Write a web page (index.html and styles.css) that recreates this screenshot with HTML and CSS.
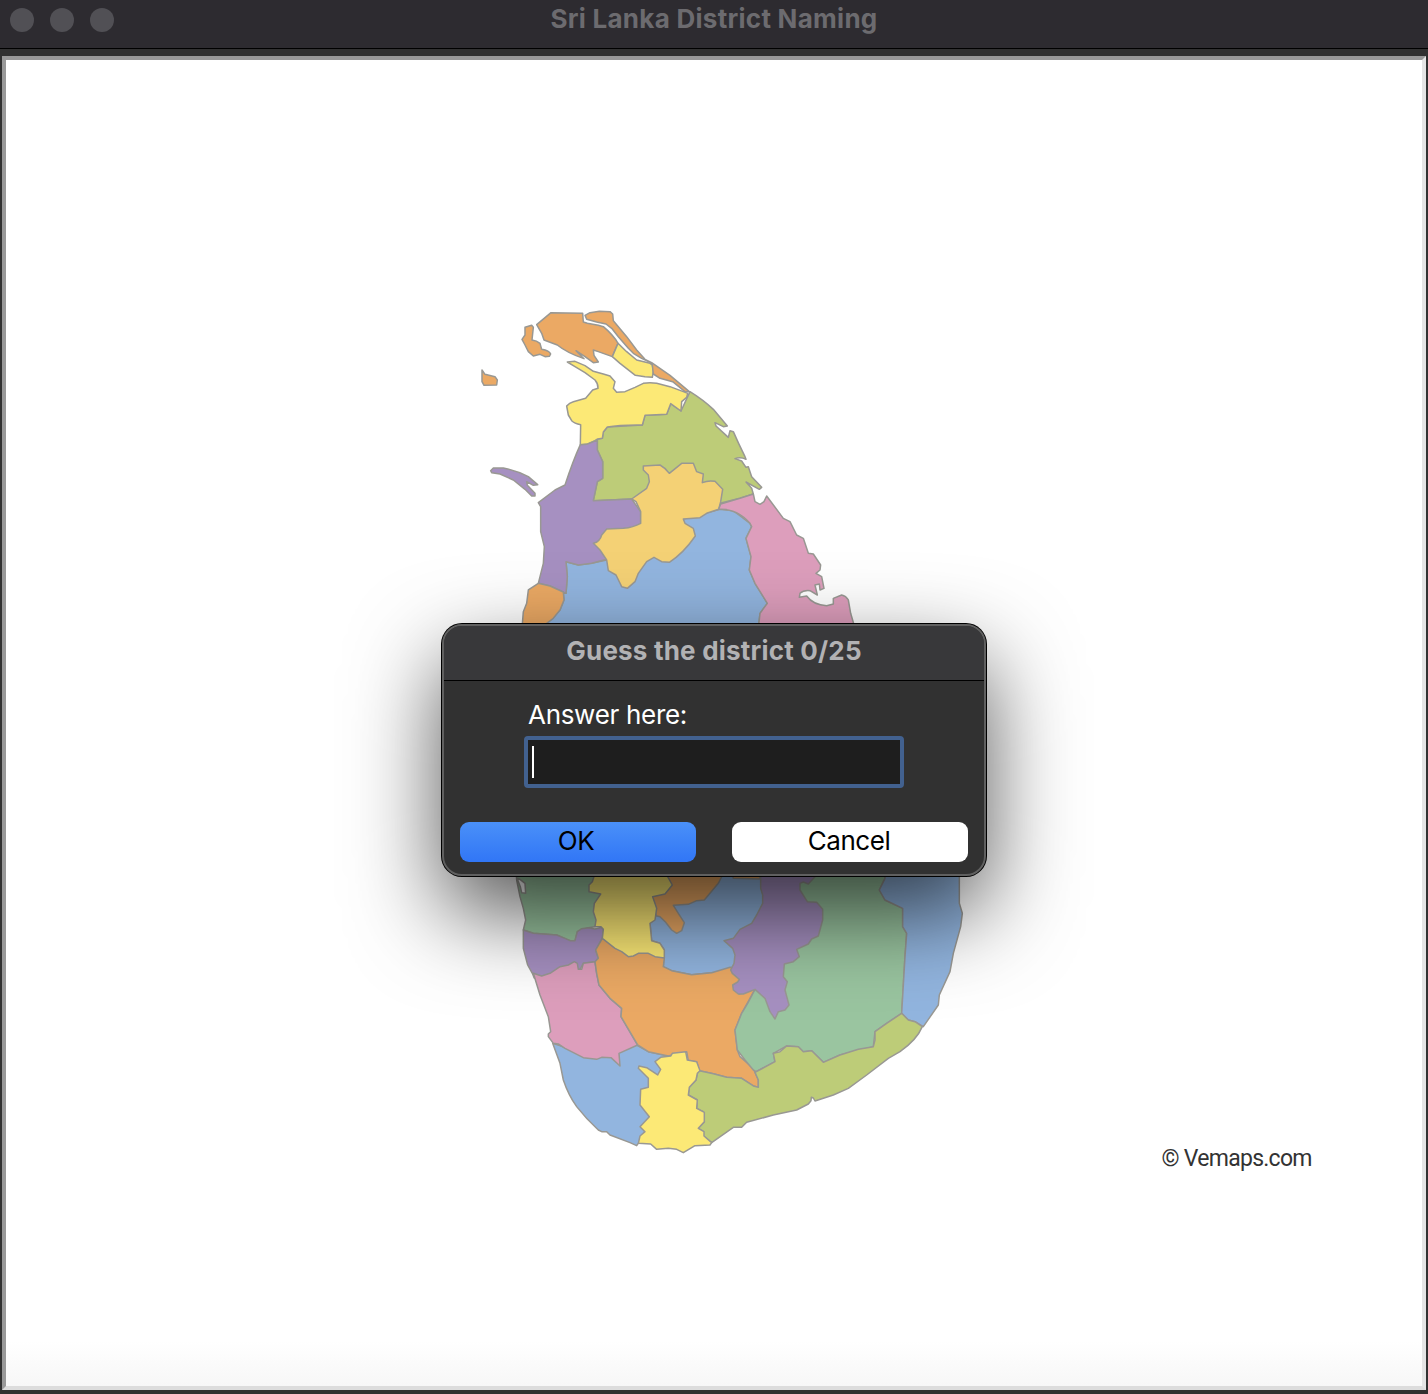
FILE: index.html
```html
<!DOCTYPE html>
<html lang="en">
<head>
<meta charset="utf-8">
<title>Sri Lanka District Naming</title>
<link rel="stylesheet" href="styles.css">
</head>
<body>
<div class="window">
  <header class="titlebar">
    <div class="lights"><span></span><span></span><span></span></div>
    <h1 class="title">Sri Lanka District Naming</h1>
  </header>
  <main class="canvas">
    <svg class="map" viewBox="6 60 1416 1326" role="img" aria-label="Map of Sri Lanka districts">
      <g class="districts" transform="translate(470 300) scale(.33333)">
        <path class="orange" d="M200,74 243,38 338,40 340,66 352,70 385,76 400,80 Q430,105 444,130 L427,170 385,155 370,150 372,166 385,186 370,188 345,170 318,152 342,176 Q290,158 262,135 L222,120 215,100Z"/>
        <path class="yellow" d="M444,130 470,155 500,180 540,190 547,195 550,215 547,232 525,230 496,226 450,190 427,170Z"/>
        <path class="orange" d="M345,46 360,38 388,34 420,35 428,42 430,62 470,110 500,150 525,178 545,188 600,226 658,275 645,275 608,245 570,235 550,222 547,195 540,187 515,175 490,160 475,145 445,110 425,85 408,72 380,66 350,58Z"/>
        <path class="orange" d="M165,82 185,76 190,82 186,120 Q200,122 210,130 L215,148 Q238,152 242,162 L238,169 225,170 210,163 190,168 175,155 165,135 156,118 165,105Z"/>
        <path class="orange" d="M36,210 45,223 75,230 82,240 80,255 42,256 36,245Z"/>
        <path class="purple" d="M62,512 70,504 100,504 Q140,512 175,530 L203,554 190,556 170,545 172,556 195,580 195,588 185,588 165,568 130,540 90,522 65,518Z"/>
        <path class="lime" d="M660,275 Q700,300 730,328 L772,378 760,380 735,368 738,378 775,412 780,392 790,395 Q805,430 825,470 L828,478 Q812,470 795,476 L815,483 828,502 835,500 845,530 875,562 868,568 828,546 845,565 850,582 810,595 750,610 640,657 485,597 370,602 382,545 398,535 398,485 382,450 382,417 397,415 400,396 412,381 517,375 525,346 590,343 602,311 633,333Z"/>
        <path class="yellow" d="M292,186 315,184 345,197 370,214 400,222 420,228 435,245 430,265 440,277 465,275 495,262 520,250 Q540,246 560,250 L600,260 640,275 653,280 650,292 635,305 633,333 602,311 590,343 Q560,345 525,346 L517,375 Q450,374 412,381 L400,396 397,415 383,417 375,422 350,433 331,434 332,374 Q313,370 305,362 L295,345 290,318 Q298,308 310,305 L347,295 368,270 384,265 Q385,252 375,240 L345,218 315,200Z"/>
        <path class="blue" d="M288,785 325,795 365,790 410,780 640,657 750,628 790,632 840,670 845,680 828,715 843,770 838,810 855,850 892,910 870,940 865,985 215,985 230,970 270,930 282,900 280,880 288,880 292,830Z"/>
        <path class="purple" d="M331,434 Q310,480 285,555 L255,570 205,608 212,620 212,695 223,740 220,790 205,850 240,858 288,880 292,830 288,785 325,795 365,790 410,778 512,670 512,635 485,597 370,602 382,545 398,535 398,485 382,450 382,420 350,433Z"/>
        <path class="amber" d="M485,597 530,565 538,545 535,525 520,510 520,498 570,495 Q588,505 598,520 L635,490 670,490 680,515 700,522 697,548 Q715,540 735,544 L758,568 752,605 746,628 710,640 690,653 640,657 645,670 670,685 676,708 Q640,760 598,787 L575,785 552,772 530,785 505,820 495,845 472,865 455,860 438,825 415,812 410,780 390,750 370,730 Q390,725 395,705 L410,687 460,685 Q490,682 512,670 L512,635 498,605Z"/>
        <path class="orange" d="M205,850 175,870 170,910 160,935 156,985 215,985 230,970 250,955 270,930 282,900 280,876 240,858Z"/>
        <path class="pink" d="M850,582 855,605 870,613 882,605 890,588 940,655 960,665 980,705 1000,715 1015,760 1030,762 1052,795 1050,810 1038,820 1055,830 1062,865 1050,870 1048,852 1035,855 1042,885 1020,872 Q1000,870 990,880 L988,892 1010,888 Q1030,915 1070,917 L1090,912 1090,895 1115,885 Q1128,888 1135,900 L1142,940 1155,985 865,985 870,940 892,910 855,850 838,810 843,770 828,715 845,680 840,670 Q800,625 746,628 L752,612 810,595Z"/>
      </g>
      <g class="districts" transform="translate(505 870) scale(.33333)">
        <path class="green" d="M33,0 35,30 45,80 55,115 62,150 55,180 85,190 155,195 195,212 210,212 217,185 250,173 270,170 300,70 275,0Z"/>
        <path class="sliver" d="M36,25 45,28 60,40 62,70 50,68 46,50Z"/>
        <path class="purple" d="M55,180 85,190 155,195 180,205 195,212 210,212 217,185 230,176 250,173 270,177 290,172 295,178 292,205 272,240 280,265 270,275 235,280 225,298 110,318 88,325 82,310 68,285 55,235Z"/>
        <path class="blue" d="M143,520 235,550 395,525 430,545 490,558 467,640 407,820 400,820 395,827 375,818 315,795 305,785 290,785 280,780 Q242,745 215,710 Q190,675 175,630 L165,580Z"/>
        <path class="pink" d="M85,310 110,318 135,310 165,290 190,285 208,275 217,280 220,298 230,298 235,280 270,275 275,310 282,345 315,385 350,415 348,440 398,525 342,550 345,588 318,563 290,562 275,568 235,563 180,535 160,522 145,520 130,500 130,492 137,485 130,440 105,375Z"/>
        <path class="blue" d="M435,160 455,135 650,0 790,0 790,300 620,308 560,314 500,302 475,290 478,240 465,220 440,212Z"/>
        <path class="orange" d="M680,0 685,25 765,27 765,0Z"/>
        <path class="orange" d="M485,0 660,0 640,40 598,90 575,92 550,103 505,106 520,130 538,158 530,182 515,190 500,180 482,157 465,140 453,137 440,80Z"/>
        <path class="orange" d="M292,205 272,240 280,265 270,275 275,310 282,345 315,385 350,415 348,440 398,525 430,545 490,558 545,545 550,572 575,575 583,602 625,611 665,622 710,625 745,648 760,652 760,630 745,595 705,560 697,540 690,480 710,430 750,358 703,372 750,300 675,292 620,308 560,314 500,302 475,290 478,264 465,235 360,225Z"/>
        <path class="yellow" d="M273,0 262,35 252,45 252,65 287,72 268,100 265,125 273,150 270,170 288,170 295,178 292,205 330,235 350,245 370,260 385,258 400,250 430,250 450,260 478,264 478,240 465,220 440,212 435,160 450,150 455,115 443,80 480,72 502,45 488,20 485,0Z"/>
        <path class="green" d="M750,358 728,400 710,430 690,480 697,540 720,570 745,600 753,605 810,575 805,550 845,528 880,530 895,545 920,542 955,577 1005,555 1105,530 1110,485 1145,460 1190,430 1200,260 1205,190 1193,170 1193,115 1140,90 1123,60 1140,25 1140,0 800,0 790,300Z"/>
        <path class="purple" d="M767,0 767,55 773,75 773,100 755,135 740,160 705,178 685,205 657,212 683,235 690,255 687,280 677,300 682,310 703,328 698,336 683,345 685,360 700,372 715,372 750,358 780,385 795,425 810,447 820,425 840,420 852,405 840,360 847,335 835,320 838,282 865,275 883,260 875,238 910,222 920,207 940,198 953,150 953,118 935,97 907,95 885,60 885,40 895,36 910,42 930,20 935,0Z"/>
        <path class="blue" d="M1140,0 1140,25 1123,60 1140,90 1193,115 1193,170 1205,190 1200,260 1190,430 1210,450 1230,455 1255,470 1300,405 1303,375 1335,305 1345,250 1367,170 1372,130 1363,100 1363,0Z"/>
        <path class="lime" d="M1190,430 1210,450 1230,455 1252,470 Q1235,510 1185,545 L1150,565 1085,615 1030,655 985,675 930,693 925,684 919,682 918,692 910,702 875,720 805,735 725,757 710,772 685,772 620,818 595,798 595,785 580,775 598,755 595,725 575,715 577,690 550,675 553,652 573,630 577,610 583,602 625,611 665,622 710,625 745,648 760,652 760,630 750,607 810,575 805,550 825,545 845,528 880,530 895,545 920,542 955,577 1005,555 1060,538 1105,530 1110,510 1110,485 1145,460Z"/>
        <path class="yellow" d="M450,575 467,562 497,558 502,550 542,545 547,570 575,575 585,602 577,610 573,630 553,652 550,675 577,690 575,715 598,727 598,755 580,775 597,785 597,798 620,818 615,825 570,827 535,848 515,838 490,835 455,838 437,822 400,820 405,798 420,785 405,770 433,740 405,705 407,658 430,652 430,625 400,595 402,588 425,593 458,615 467,598Z"/>
      </g>
      <text class="credit" x="1161.5" y="1165.5" textLength="151">© Vemaps.com</text>
    </svg>
  </main>
</div>
<form class="dialog">
  <div class="dialog-head">Guess the district 0/25</div>
  <div class="dialog-body">
    <div class="field">
      <label class="label">Answer here:</label>
      <div class="input"><span class="caret"></span></div>
    </div>
    <div class="actions">
      <button type="button" class="btn btn-ok">OK</button>
      <button type="button" class="btn">Cancel</button>
    </div>
  </div>
</form>
</body>
</html>
```
FILE: styles.css
```css
* { box-sizing: border-box; }

body {
  margin: 0;
  background: #313131;
  font-family: Inter, "Liberation Sans", sans-serif;
}

.window {
  display: flex;
  flex-direction: column;
  height: 1394px;
  padding-bottom: 4px;
  overflow: hidden;
}

.titlebar {
  display: grid;
  grid-template-columns: 160px 1fr 160px;
  height: 49px;
  flex: none;
  background: #2d2b30;
  border-bottom: 1px solid #000;
}

.lights { display: flex; gap: 16px; padding: 8px 0 0 10px; }
.lights span { width: 24px; height: 24px; border-radius: 50%; background: #515055; }

.title {
  margin: 0;
  text-align: center;
  font-size: 26px;
  line-height: 38px;
  font-weight: 700;
  letter-spacing: 0.27px;
  color: #6c6b6f;
  white-space: nowrap;
}

.canvas {
  flex: 1;
  min-height: 0;
  margin: 7px 2px 0;
  border: 4px solid;
  border-color: #999 #e4e4e4 #dcdcdc #999;
  background: linear-gradient(#fff, #fff calc(100% - 45px), #f7f7f7);
}

.map { display: block; width: 1416px; height: 1326px; }

.districts path { stroke: #999893; stroke-width: 4.5; stroke-linejoin: round; }
.districts .orange { fill: #eba964; }
.districts .yellow { fill: #fce976; }
.districts .purple { fill: #a690c1; }
.districts .lime { fill: #bdcc78; }
.districts .amber { fill: #f4d175; }
.districts .blue { fill: #92b5df; }
.districts .pink { fill: #dd9ebc; }
.districts .green { fill: #9ac5a0; }
.districts .sliver { fill: #fff; }

.credit { font-family: Roboto, sans-serif; font-size: 23px; fill: #333; }

.dialog {
  position: absolute;
  left: 442px;
  top: 624px;
  width: 544px;
  height: 252px;
  display: flex;
  flex-direction: column;
  border: 2px solid #606060;
  border-radius: 20px;
  background: #313131;
  box-shadow: 0 0 0 1px #000, 0 36px 90px rgba(0, 0, 0, .68);
}

.dialog-head {
  height: 55px;
  border-bottom: 1px solid #000;
  border-radius: 18px 18px 0 0;
  background: #38383a;
  text-align: center;
  font-size: 26px;
  line-height: 49px;
  font-weight: 700;
  letter-spacing: 0.2px;
  color: #b2b2b4;
}

.dialog-body {
  flex: 1;
  display: flex;
  flex-direction: column;
  justify-content: space-between;
  padding: 16px 16px 12px;
}

.field { display: flex; flex-direction: column; width: 380px; margin: 0 auto; }

.label {
  padding-left: 4px;
  font-size: 26px;
  line-height: 36px;
  letter-spacing: -0.3px;
  color: #fff;
}

.input {
  height: 52px;
  margin-top: 3px;
  padding: 6px 4px;
  border: 4px solid #42618f;
  border-radius: 4px;
  background: #1e1e1e;
}

.caret { display: block; width: 2px; height: 32px; background: #fff; }

.actions { display: grid; grid-template-columns: 1fr 1fr; gap: 36px; }

.btn {
  height: 40px;
  padding: 0 2px 2px 0;
  border: 0;
  border-radius: 9px;
  background: #fff;
  font: 400 26px/38px Inter, "Liberation Sans", sans-serif;
  letter-spacing: -0.45px;
  color: #000;
}

.btn-ok {
  padding-right: 4px;
  background: linear-gradient(#4a90f8, #3176f6);
}
```
